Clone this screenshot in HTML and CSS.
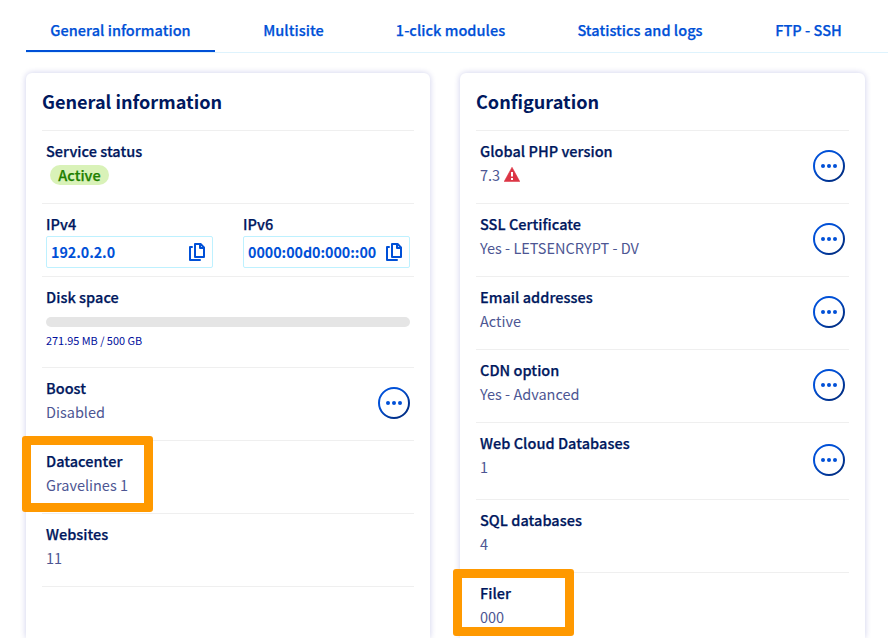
FILE: index.html
```html
<!DOCTYPE html>
<html lang="en">
<head>
<meta charset="utf-8">
<title>General information</title>
<link rel="stylesheet" href="styles.css">
</head>
<body>
<svg class="defs" width="0" height="0" aria-hidden="true">
  <defs>
    <linearGradient id="ring" x1="0.15" y1="0.15" x2="0.75" y2="0.85">
      <stop offset="0.3" stop-color="#0050d7"/>
      <stop offset="1" stop-color="#00308a"/>
    </linearGradient>
    <symbol id="more" viewBox="0 0 32 32">
      <circle cx="16" cy="16" r="15" fill="none" stroke="url(#ring)" stroke-width="2"/>
      <circle cx="10" cy="16" r="2" fill="#0050d7"/>
      <circle cx="16" cy="16" r="2" fill="#0050d7"/>
      <circle cx="22" cy="16" r="2" fill="#0050d7"/>
    </symbol>
    <symbol id="copy" viewBox="0 0 16 18">
      <path d="M6 1h5.6L15 4.4V14H6z M11 1v4h4 M3 4H1v13h10" fill="none" stroke="#0050d7" stroke-width="2" stroke-linejoin="round" stroke-linecap="round"/>
    </symbol>
  </defs>
</svg>
<nav class="tabs">
  <a class="tab tab-general active">General information</a>
  <a class="tab tab-multisite">Multisite</a>
  <a class="tab tab-modules">1-click modules</a>
  <a class="tab tab-stats">Statistics and logs</a>
  <a class="tab tab-ftp">FTP - SSH</a>
</nav>
<main class="cards">
  <section class="card">
    <h2>General information</h2>
    <div class="row"><div><h3>Service status</h3><span class="badge">Active</span></div></div>
    <div class="row ips">
      <div class="ip"><h3>IPv4</h3><div class="field"><span>192.0.2.0</span><svg class="copy"><use href="#copy"/></svg></div></div>
      <div class="ip"><h3>IPv6</h3><div class="field"><span>0000:00d0:000::00</span><svg class="copy"><use href="#copy"/></svg></div></div>
    </div>
    <div class="row disk"><div class="usage"><h3>Disk space</h3><div class="bar"></div><small>271.95 MB / 500 GB</small></div></div>
    <div class="row"><div><h3>Boost</h3><p>Disabled</p></div><svg class="more"><use href="#more"/></svg></div>
    <div class="row"><div><h3>Datacenter</h3><p>Gravelines 1</p></div><i class="mark mark-datacenter"></i></div>
    <div class="row closing"><div><h3>Websites</h3><p>11</p></div></div>
  </section>
  <section class="card">
    <h2>Configuration</h2>
    <div class="row"><div><h3>Global PHP version</h3><p>7.3 <svg class="warn" viewBox="0 0 16 15"><path d="M8 .3 15.8 14.6H.2z" fill="#dc3545" stroke="#dc3545" stroke-width=".6" stroke-linejoin="round"/><path d="M8 5v4.4M8 11v2" stroke="#fff" stroke-width="2"/></svg></p></div><svg class="more"><use href="#more"/></svg></div>
    <div class="row"><div><h3>SSL Certificate</h3><p>Yes - LETSENCRYPT - DV</p></div><svg class="more"><use href="#more"/></svg></div>
    <div class="row"><div><h3>Email addresses</h3><p>Active</p></div><svg class="more"><use href="#more"/></svg></div>
    <div class="row"><div><h3>CDN option</h3><p>Yes - Advanced</p></div><svg class="more"><use href="#more"/></svg></div>
    <div class="row tall"><div><h3>Web Cloud Databases</h3><p>1</p></div><svg class="more"><use href="#more"/></svg></div>
    <div class="row"><div><h3>SQL databases</h3><p>4</p></div></div>
    <div class="row last"><div><h3>Filer</h3><p>000</p></div><i class="mark mark-filer"></i></div>
  </section>
</main>
</body>
</html>
```
FILE: styles.css
```css
* { box-sizing: border-box; }
body {
  margin: 0;
  height: 638px;
  overflow: hidden;
  background: #fff;
  color: #00185e;
  font: 400 14.5px/24px "Noto Sans CJK JP", sans-serif;
}
h2, h3, p { margin: 0; white-space: nowrap; }
.defs { position: absolute; }
.tabs {
  display: flex;
  gap: 24px;
  height: 53px;
  margin-left: 26px;
  padding-top: 18px;
  border-bottom: 1px solid #def3fd;
}
.tab {
  flex: none;
  height: 34px;
  text-align: center;
  white-space: nowrap;
  color: #0050d7;
  font-weight: 500;
  letter-spacing: .04px;
  -webkit-text-stroke: .25px;
}
.tab-general { width: 189px; }
.tab-multisite { width: 109px; }
.tab-modules { width: 157px; }
.tab-stats { width: 174px; }
.tab-ftp { width: 115px; }
.active { border-bottom: 2px solid #0050d7; }
.cards {
  display: grid;
  grid-template-columns: 404px 405px;
  gap: 30px;
  margin: 20px 0 0 26px;
}
.card {
  height: 565px;
  padding: 0 16px;
  border-radius: 6px 6px 0 0;
  box-shadow: 0 0 6px rgba(0, 14, 156, .2);
}
h2 { height: 57px; padding-top: 16px; font-size: 18.1px; font-weight: 700; }
h3 { font-size: 14.5px; font-weight: 500; letter-spacing: .04px; -webkit-text-stroke: .25px; }
p { color: #4d5693; }
.row {
  position: relative;
  display: flex;
  justify-content: space-between;
  height: 73px;
  padding: 8px 4px 0;
  border-top: 1px solid #efefef;
}
.tall { height: 77px; }
.last { height: 65px; }
.closing { height: 74px; border-bottom: 1px solid #efefef; }
.more { flex: none; width: 32px; height: 32px; margin-top: 11px; }
.tall .more { margin-top: 13px; }
.badge {
  display: block;
  width: 59px;
  height: 20px;
  margin: 2px 0 0 4px;
  border-radius: 10px;
  background: #d9f2b8;
  color: #1e8000;
  font-weight: 500;
  line-height: 20px;
  text-align: center;
  -webkit-text-stroke: .25px;
}
.ips { justify-content: flex-start; gap: 30px; }
.ip { width: 167px; }
.field {
  display: flex;
  align-items: center;
  justify-content: space-between;
  height: 32px;
  padding: 0 7px 0 4px;
  border: 1px solid #bef1ff;
  border-radius: 2px;
  color: #0050d7;
  font-size: 14.3px;
  font-weight: 700;
  letter-spacing: -.05px;
}
.copy { flex: none; width: 16px; height: 18px; }
.disk { height: 91px; }
.usage { width: 100%; }
.bar { height: 10px; margin-top: 8px; border-radius: 5px; background: #e5e5e5; }
small { display: block; margin-top: 1px; color: #000e9c; font-size: 10.9px; }
.warn { width: 16px; height: 15px; margin-left: 1px; vertical-align: -1px; }
.mark { position: absolute; border: 9px solid #ff9900; border-radius: 3px; }
.mark-datacenter { left: -20px; top: -5px; width: 131px; height: 76px; }
.mark-filer { left: -23px; top: -4px; width: 121px; height: 67px; }
```
